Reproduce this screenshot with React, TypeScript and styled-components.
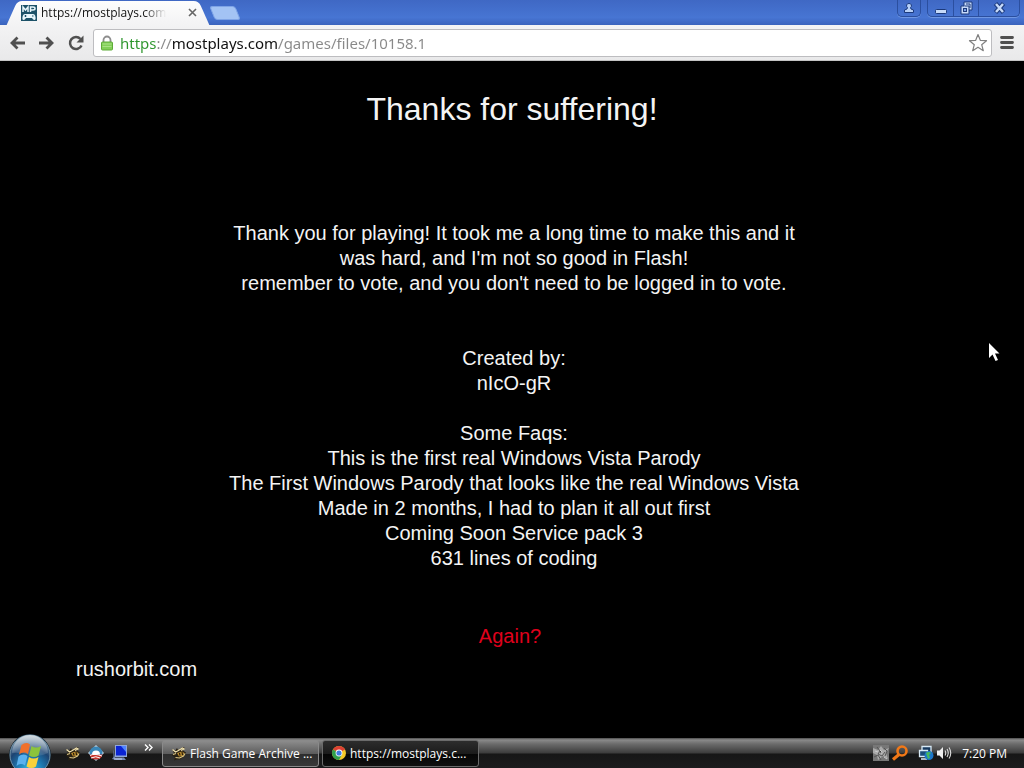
import React from "react";
import styled, { createGlobalStyle, css } from "styled-components";

const Global = createGlobalStyle`
  *, *::before, *::after { box-sizing: border-box; }
  html, body { margin: 0; background: #000; }
  button, input { font: inherit; border: 0; padding: 0; margin: 0; background: none; color: inherit; }
  a { color: inherit; text-decoration: none; }
  svg { display: block; flex: none; }
  p, h1 { margin: 0; font-weight: 400; }
`;

const uiFont = `"Open Sans", "Noto Sans", sans-serif`;

const Desktop = styled.div`
  display: flex;
  flex-direction: column;
  min-height: 100vh;
  overflow: hidden;
  background: #000;
  font-family: ${uiFont};
`;

const TabStrip = styled.header`
  display: flex;
  align-items: flex-end;
  height: 25px;
  padding: 0 4px 0 12px;
  background: linear-gradient(#3f68c4, #4775d3 70%, #3a63bd);
`;

const Tab = styled.div`
  position: relative;
  z-index: 0;
  display: flex;
  align-items: center;
  width: 192px;
  height: 25px;
  padding: 0 4px 0 9px;
  color: #111;
  font-size: 12px;
  &::before,
  &::after {
    content: "";
    position: absolute;
    z-index: -1;
    top: 1px;
    bottom: 0;
    background: linear-gradient(#fdfdfd, #f3f3f4);
  }
  &::before {
    left: 0;
    right: 20px;
    border-top-left-radius: 5px;
    transform: skewX(-24deg);
  }
  &::after {
    left: 20px;
    right: 0;
    border-top-right-radius: 5px;
    transform: skewX(24deg);
  }
`;

const TabTitle = styled.span`
  flex: none;
  width: 128px;
  margin-left: 4px;
  white-space: nowrap;
  mask-image: linear-gradient(90deg, #000 80%, transparent 98%);
`;

const TabClose = styled.button`
  display: grid;
  place-items: center;
  width: 16px;
  height: 16px;
  margin-left: auto;
`;

const NewTab = styled.button`
  width: 26px;
  height: 14px;
  margin: 0 0 5px 8px;
  border: 1px solid #7fa4e6;
  border-radius: 3px;
  background: #a3c3f4;
  transform: skewX(22deg);
`;

const WindowControls = styled.div`
  display: flex;
  align-self: flex-start;
  gap: 6px;
  margin-left: auto;
`;

const ControlGroup = styled.div`
  display: flex;
  height: 17px;
  border: 1px solid #2b4f9f;
  border-top: 0;
  border-radius: 0 0 5px 5px;
  box-shadow: 0 1px 0 #6f97e3;
`;

const WindowButton = styled.button<{ $wide?: boolean; $narrow?: boolean }>`
  display: grid;
  place-items: center;
  width: ${(p) => (p.$wide ? 41 : p.$narrow ? 22 : 25)}px;
  & + & {
    border-left: 1px solid #2b4f9f;
  }
`;

const Toolbar = styled.nav`
  display: flex;
  align-items: center;
  height: 36px;
  padding: 0 8px;
  border-bottom: 1px solid #c4c4c4;
  background: linear-gradient(#f3f3f4, #e9e9ea);
`;

const ToolButton = styled.button<{ $size: number }>`
  display: grid;
  place-items: center;
  width: ${(p) => p.$size}px;
  height: 24px;
`;

const AddressBar = styled.div`
  display: flex;
  flex: 1;
  align-items: center;
  height: 28px;
  margin: 0 6px 0 8px;
  padding: 0 3px 0 6px;
  border: 1px solid #bdbdc0;
  border-radius: 3px;
  background: #fff;
`;

const Address = styled.input`
  flex: 1;
  min-width: 0;
  height: 24px;
  margin-left: 6px;
  outline: 0;
  font-family: "Noto Sans", sans-serif;
  font-size: 15px;
  line-height: 24px;
  background: linear-gradient(90deg, #2d962d 36px, #888 36px, #888 51px, #111 51px, #111 158px, #888 158px);
  background-clip: text;
  -webkit-text-fill-color: transparent;
`;

const Stage = styled.main`
  display: flex;
  flex: 1;
  flex-direction: column;
  align-items: center;
  padding: 29px 16px 0 20px;
  color: #f4f4f4;
  font-family: "Liberation Sans", Arial, sans-serif;
  font-size: 20px;
  line-height: 25px;
  text-align: center;
`;

const Title = styled.h1`
  padding-right: 4px;
  font-size: 32px;
  line-height: 38px;
`;

const Block = styled.p<{ $gap: number }>`
  margin-top: ${(p) => p.$gap}px;
`;

const Again = styled.button`
  margin-top: 53px;
  padding-right: 8px;
  color: #e0001c;
`;

const SiteLink = styled.a`
  align-self: flex-start;
  margin: 8px 0 0 56px;
`;

const Cursor = styled.svg`
  position: absolute;
  left: 988px;
  top: 342px;
`;

const Taskbar = styled.footer`
  position: relative;
  display: flex;
  align-items: center;
  height: 30px;
  padding: 0 17px 0 65px;
  color: #fff;
  font-size: 12px;
  background: linear-gradient(#4c4c4c, #8a8a8a 2px, #6b6b6b 6px, #3c3c3c 15px, #161616 16px, #1c1c1d 29px);
`;

const Start = styled.button`
  position: absolute;
  left: 8px;
  top: -5px;
`;

const IconButton = styled.button`
  display: grid;
  place-items: center;
`;

const QuickLaunch = styled.div`
  display: flex;
  align-items: center;
  gap: 7px;
`;

const Chevron = styled.button`
  align-self: flex-start;
  margin: 6px 9px 0 15px;
`;

const activeTask = css`
  background: linear-gradient(#2d2d2d, #1b1b1b 50%, #050505 52%, #101010);
  border-color: #6b6b6b;
`;

const Task = styled.button<{ $active?: boolean }>`
  display: flex;
  align-items: center;
  gap: 3px;
  width: 157px;
  height: 27px;
  margin-right: 3px;
  padding-left: 8px;
  border: 1px solid #8a8a8a;
  border-radius: 3px;
  background: linear-gradient(#8c8c8c, #5d5d5d 50%, #2d2d2d 52%, #383838);
  white-space: nowrap;
  ${(p) => p.$active && activeTask}
`;

const Tray = styled.div`
  display: flex;
  align-items: center;
  gap: 10px;
  margin-left: auto;
`;

const TrayGroup = styled.div`
  display: flex;
  gap: 2px;
`;

const BeeIcon = () => (
  <svg width="16" height="16" viewBox="0 0 16 16">
    <path d="M1 4l3 2 2-3 1 2 5-3 2 1-2 2.500 3 2-2 4-4 3H6l-3 1 1-3-3-2 2-2z" fill="#2a2214" />
    <path d="M1.500 4.500l3 2.500 2-1 5-3 1.500 1-3 1.500" fill="none" stroke="#f0e2b0" strokeWidth="1.300" />
    <path d="M6 8l5-1.500 2.500 1.500-2 3-3.500.5z" fill="#b98a2e" />
    <path d="M2 9.500l3-1M4.500 12.500l4 .5 4-2 1.500-2.500" fill="none" stroke="#dcc684" strokeWidth="1.200" />
    <path d="M8.500 8l.5 2.500M11 7l.5 3" stroke="#1d1608" strokeWidth="1.100" />
  </svg>
);

const SunriseIcon = () => (
  <svg width="16" height="16" viewBox="0 0 16 16">
    <path d="M8 0l8 8-8 8-8-8z" fill="#c5d9e7" />
    <circle cx="8" cy="8" r="6.500" fill="#3986b7" />
    <path d="M1.500 9.500h13A6.500 6.500 0 018 14.500 6.500 6.500 0 011.500 9.500z" fill="#c8352c" />
    <path d="M4 9.500a4 4 0 018 0z" fill="#fff" />
    <path d="M2 10.500q4-2.500 12 .5M3 13q5-2.500 9 0" fill="none" stroke="#fff" />
  </svg>
);

const MonitorIcon = () => (
  <svg width="18" height="16" viewBox="0 0 18 16">
    <path d="M4 0h12v12H4z" fill="#8fa6da" />
    <path d="M5 1h10v9.500H5z" fill="#0a24d4" />
    <path d="M10 1h5v6z" fill="#4e83ff" />
    <path d="M2.500 4v8l-1.500 2 4 1h10l-2-2.500H4z" fill="#7488b4" />
    <path d="M3 14h8" stroke="#c5d1e8" />
  </svg>
);

const ChromeIcon = () => (
  <svg width="16" height="16" viewBox="0 0 16 16">
    <circle cx="8" cy="8" r="7" fill="#f5c928" />
    <path d="M8 8L1.940 4.500A7 7 0 0114.060 4.500z" fill="#dc4034" />
    <path d="M8 8L1.940 4.500A7 7 0 008 15l3-5.500z" fill="#30a04d" />
    <circle cx="8" cy="8" r="3.400" fill="#fff" />
    <circle cx="8" cy="8" r="2.600" fill="#3f7de0" />
  </svg>
);

const StartOrb = () => (
  <svg width="44" height="44" viewBox="0 0 44 44">
    <defs>
      <radialGradient id="orb" cx=".5" cy=".9" r=".9">
        <stop offset="0" stopColor="#35c5e9" />
        <stop offset=".35" stopColor="#1f7cb5" />
        <stop offset=".65" stopColor="#1c4472" />
        <stop offset="1" stopColor="#8aa0ae" />
      </radialGradient>
      <linearGradient id="gloss" x2="0" y2="1">
        <stop offset="0" stopColor="#fff" stopOpacity=".65" />
        <stop offset="1" stopColor="#fff" stopOpacity=".08" />
      </linearGradient>
    </defs>
    <circle cx="22" cy="22" r="21" fill="#15232f" />
    <circle cx="22" cy="22" r="20" fill="url(#orb)" stroke="#6d8fa5" />
    <path d="M4 20A18 18 0 0140 20Q30 25 22 22Q13 19 4 20z" fill="url(#gloss)" />
    <path d="M13.500 12q4.500-3.500 8.500-.5l-2 9.500q-4.500-3-9 .5z" fill="#f0702a" />
    <path d="M23.500 13q4.500 3 9.500 0l-2.500 9.500q-4.500 3-9.500 0z" fill="#8cc43c" />
    <path d="M10.500 23.500q4.500-3.500 9-.5l-2.500 9.500q-4.500-3-8.500.5z" fill="#5ab1ee" />
    <path d="M21 24q4.500 3 9.500 0l-2.500 9.500q-4.500 3-9.500 0z" fill="#fbd13c" />
  </svg>
);

export default function App() {
  return (
    <Desktop>
      <Global />
      <TabStrip>
        <Tab>
          <svg width="16" height="16" viewBox="0 0 16 16">
            <rect width="16" height="16" fill="#1d5268" />
            <path d="M2 7V2l2.500 3L7 2v5M9.500 7V2H12q2 0 2 1.500T12 5H10" fill="none" stroke="#e8f6fb" strokeWidth="1.500" />
            <path d="M4 9h8q2 0 2.500 3t-1 3q-1.500 0-2.500-2H5q-1 2-2.500 2t-1-3T4 9z" fill="#e8f6fb" />
            <path d="M3.500 11h2M4.500 10v2M11 11h1.500" stroke="#1d5268" />
          </svg>
          <TabTitle>https://mostplays.com</TabTitle>
          <TabClose aria-label="Close tab">
            <svg width="9" height="9" viewBox="0 0 9 9">
              <path d="M1 1l7 7M8 1L1 8" stroke="#666" strokeWidth="1.600" />
            </svg>
          </TabClose>
        </Tab>
        <NewTab aria-label="New tab" />
        <WindowControls>
          <ControlGroup>
            <WindowButton $narrow aria-label="Profile">
              <svg width="10" height="10" viewBox="0 0 10 10">
                <path d="M5 .5a2.200 2.200 0 011.500 4L7 6l2.500 1v2.500h-9V7L3 6l.5-1.500A2.200 2.200 0 015 .5z" fill="#b7d0f8" stroke="#1c3a7c" />
              </svg>
            </WindowButton>
          </ControlGroup>
          <ControlGroup>
            <WindowButton aria-label="Minimize">
              <svg width="12" height="11" viewBox="0 0 12 11">
                <rect x=".5" y="6.500" width="11" height="4" rx="1" fill="#c6daf9" stroke="#1c3a7c" />
              </svg>
            </WindowButton>
            <WindowButton aria-label="Restore">
              <svg width="13" height="14" viewBox="0 0 13 14">
                <path d="M4 1h8v8H9v4H1V5h3z" fill="#c6daf9" stroke="#1c3a7c" strokeLinejoin="round" />
                <path d="M4.500 5h4.500v4" fill="none" stroke="#1c3a7c" />
                <path d="M6 3h4v4" fill="none" stroke="#1c3a7c" />
                <rect x="3.500" y="7.500" width="3" height="3" fill="#7fa4e6" stroke="#1c3a7c" />
              </svg>
            </WindowButton>
            <WindowButton $wide aria-label="Close">
              <svg width="13" height="12" viewBox="0 0 13 12">
                <path d="M2.500 1.500l8 9M10.500 1.500l-8 9" stroke="#1c3a7c" strokeWidth="4.500" />
                <path d="M3 2l7 8M10 2l-7 8" stroke="#c6daf9" strokeWidth="2.400" />
              </svg>
            </WindowButton>
          </ControlGroup>
        </WindowControls>
      </TabStrip>

      <Toolbar>
        <ToolButton aria-label="Back" $size={18}>
          <svg width="17" height="14" viewBox="0 0 17 14">
            <path d="M16 7H3M8.500 1.500L3 7l5.500 5.500" fill="none" stroke="#505050" strokeWidth="2.800" />
          </svg>
        </ToolButton>
        <ToolButton aria-label="Forward" $size={40}>
          <svg width="17" height="14" viewBox="0 0 17 14">
            <path d="M1 7h13M8.500 1.500L14 7l-5.500 5.500" fill="none" stroke="#505050" strokeWidth="2.800" />
          </svg>
        </ToolButton>
        <ToolButton aria-label="Reload" $size={19}>
          <svg width="16" height="16" viewBox="0 0 16 16">
            <path d="M13.500 10.500A6 6 0 1112.500 4" fill="none" stroke="#505050" strokeWidth="2.500" />
            <path d="M15.500 .5V7.500H8.500z" fill="#505050" />
          </svg>
        </ToolButton>
        <AddressBar>
          <svg width="14" height="16" viewBox="0 0 14 16">
            <path d="M3.500 8V5a3.500 3.500 0 017 0v3" fill="none" stroke="#8d8d8d" strokeWidth="1.800" />
            <rect x="1.500" y="7" width="11" height="8" rx="1" fill="#83cf59" stroke="#5eac39" />
            <path d="M2.500 9h9M2.500 11.500h9" stroke="#a9e287" />
          </svg>
          <Address aria-label="Address" defaultValue="https://mostplays.com/games/files/10158.1" spellCheck={false} />
          <IconButton aria-label="Bookmark this page">
            <svg width="20" height="19" viewBox="0 0 20 19">
              <path d="M10 1.500l2.300 5.800 6.200.4-4.800 4 1.600 6L10 14.300l-5.300 3.400 1.600-6-4.800-4 6.200-.4z" fill="#fff" stroke="#808080" strokeWidth="1.200" strokeLinejoin="round" />
            </svg>
          </IconButton>
        </AddressBar>
        <ToolButton aria-label="Menu" $size={18}>
          <svg width="14" height="13" viewBox="0 0 14 13">
            <path d="M1.500 1.500h11M1.500 6.500h11M1.500 11.500h11" stroke="#505050" strokeWidth="2.800" strokeLinecap="round" />
          </svg>
        </ToolButton>
      </Toolbar>

      <Stage>
        <Title>Thanks for suffering!</Title>
        <Block $gap={93}>
          Thank you for playing! It took me a long time to make this and it
          <br />
          was hard, and I'm not so good in Flash!
          <br />
          remember to vote, and you don't need to be logged in to vote.
        </Block>
        <Block $gap={50}>
          Created by:
          <br />
          nIcO-gR
        </Block>
        <Block $gap={25}>
          Some Faqs:
          <br />
          This is the first real Windows Vista Parody
          <br />
          The First Windows Parody that looks like the real Windows Vista
          <br />
          Made in 2 months, I had to plan it all out first
          <br />
          Coming Soon Service pack 3
          <br />
          631 lines of coding
        </Block>
        <Again>Again?</Again>
        <SiteLink href="#">rushorbit.com</SiteLink>
      </Stage>

      <Taskbar>
        <Start aria-label="Start">
          <StartOrb />
        </Start>
        <QuickLaunch>
          <IconButton aria-label="Flash Game Archive">
            <BeeIcon />
          </IconButton>
          <IconButton aria-label="Campaign">
            <SunriseIcon />
          </IconButton>
          <IconButton aria-label="Show desktop">
            <MonitorIcon />
          </IconButton>
        </QuickLaunch>
        <Chevron aria-label="More">
          <svg width="9" height="7" viewBox="0 0 9 7">
            <path d="M1 .5l3 3-3 3M5 .5l3 3-3 3" fill="none" stroke="#fff" strokeWidth="1.400" />
          </svg>
        </Chevron>
        <Task>
          <BeeIcon />
          Flash Game Archive ...
        </Task>
        <Task $active>
          <ChromeIcon />
          https://mostplays.c...
        </Task>
        <Tray>
          <TrayGroup>
            <svg width="16" height="16" viewBox="0 0 16 16">
              <rect width="16" height="16" fill="#777" />
              <path d="M0 3l5 2 3-4 3 4 5-2-3 5 2 6-5-3-5 4-1-5-4-2z" fill="#aaa" />
              <path d="M4 2l3 4-2 3 4 2 3-4M1 12l4-2 3 5M11 3l3 3-2 5" fill="none" stroke="#555" />
              <path d="M7 5l2 2-1 2M2 6l3 1M11 12l3 2" stroke="#ccc" />
            </svg>
            <svg width="17" height="16" viewBox="0 0 17 16">
              <circle cx="11" cy="6" r="4.500" fill="none" stroke="#f07818" strokeWidth="2.600" />
              <path d="M8 9.500l-6 5" stroke="#f07818" strokeWidth="3.200" />
            </svg>
          </TrayGroup>
          <TrayGroup>
            <svg width="16" height="16" viewBox="0 0 16 16">
              <path d="M4 1.500h9v7H4z" fill="#16395e" stroke="#d9ebf7" strokeWidth="1.300" />
              <path d="M1.500 5.500h8v6h-8zM3 14h6" fill="#1a4c78" stroke="#d9ebf7" strokeWidth="1.300" />
              <circle cx="11" cy="10.500" r="4.500" fill="#1d77c8" />
              <path d="M8 8q3-2 5 0l-2 2 1 3-2 1-1-3z" fill="#45b85c" />
            </svg>
            <svg width="16" height="16" viewBox="0 0 16 16">
              <path d="M1 5.500h2.500L7 2v12L3.500 10.500H1z" fill="#eee" />
              <path d="M9 5.500q1.500 2.500 0 5M11 4q2.500 4 0 8M13 2.500q3.500 5.500 0 11" fill="none" stroke="#ddd" strokeWidth="1.100" />
            </svg>
          </TrayGroup>
          <time>7:20 PM</time>
        </Tray>
      </Taskbar>

      <Cursor width="12" height="20" viewBox="0 0 12 20" aria-hidden="true">
        <path d="M1 1v15l3.500-3.500L7.500 19l2.500-1-3-6.500h4.500z" fill="#fff" />
      </Cursor>
    </Desktop>
  );
}
